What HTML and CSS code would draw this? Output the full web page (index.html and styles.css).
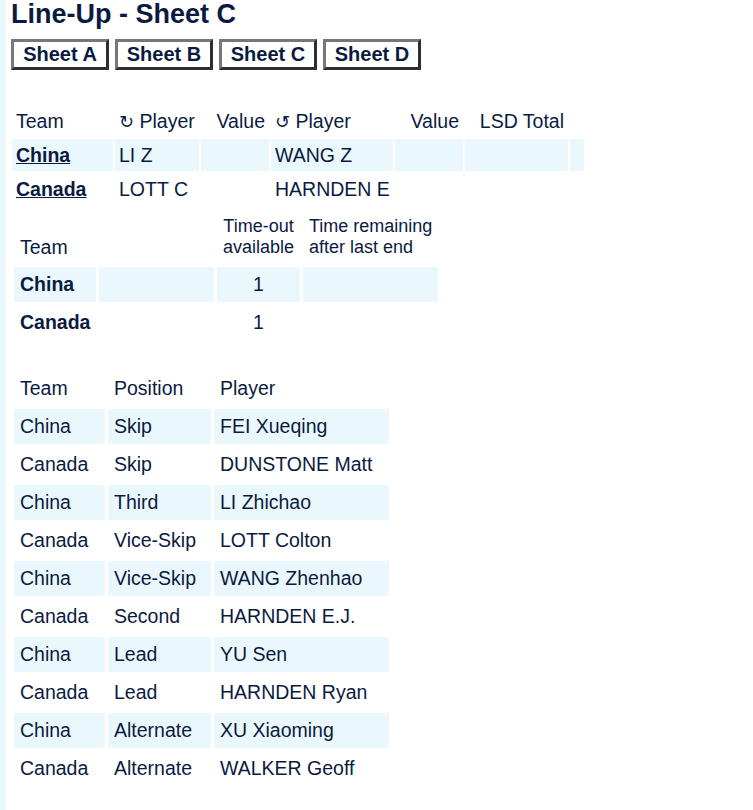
FILE: index.html
```html
<!DOCTYPE html>
<html lang="en">
<head>
<meta charset="utf-8">
<title>Line-Up - Sheet C</title>
<link rel="stylesheet" href="styles.css">
</head>
<body>
<div class="page">
  <h1 class="title">Line-Up - Sheet C</h1>
  <div class="sheets">
    <a class="sheet-btn" href="#">Sheet A</a>
    <a class="sheet-btn" href="#">Sheet B</a>
    <a class="sheet-btn" href="#">Sheet C</a>
    <a class="sheet-btn" href="#">Sheet D</a>
  </div>

  <table class="lsd">
    <thead>
      <tr>
        <th class="c1">Team</th>
        <th class="c2"><span class="arrow">↻</span> Player</th>
        <th class="c3 num">Value</th>
        <th class="c4"><span class="arrow">↺</span> Player</th>
        <th class="c5 num">Value</th>
        <th class="c6 num">LSD Total</th>
        <th class="c7"></th>
      </tr>
    </thead>
    <tbody>
      <tr class="shade">
        <td><a class="team-link" href="#">China</a></td>
        <td>LI Z</td>
        <td></td>
        <td>WANG Z</td>
        <td></td>
        <td></td>
        <td></td>
      </tr>
      <tr>
        <td><a class="team-link" href="#">Canada</a></td>
        <td>LOTT C</td>
        <td></td>
        <td>HARNDEN E</td>
        <td></td>
        <td></td>
        <td></td>
      </tr>
    </tbody>
  </table>

  <table class="timeouts">
    <thead>
      <tr>
        <th class="c1 big">Team</th>
        <th class="c2"></th>
        <th class="c3 center">Time-out<br>available</th>
        <th class="c4">Time remaining<br>after last end</th>
      </tr>
    </thead>
    <tbody>
      <tr class="shade">
        <td class="bold">China</td>
        <td></td>
        <td class="center">1</td>
        <td></td>
      </tr>
      <tr>
        <td class="bold">Canada</td>
        <td></td>
        <td class="center">1</td>
        <td></td>
      </tr>
    </tbody>
  </table>

  <table class="lineup">
    <thead>
      <tr>
        <th class="c1">Team</th>
        <th class="c2">Position</th>
        <th class="c3">Player</th>
      </tr>
    </thead>
    <tbody>
      <tr class="shade"><td>China</td><td>Skip</td><td>FEI Xueqing</td></tr>
      <tr><td>Canada</td><td>Skip</td><td>DUNSTONE Matt</td></tr>
      <tr class="shade"><td>China</td><td>Third</td><td>LI Zhichao</td></tr>
      <tr><td>Canada</td><td>Vice-Skip</td><td>LOTT Colton</td></tr>
      <tr class="shade"><td>China</td><td>Vice-Skip</td><td>WANG Zhenhao</td></tr>
      <tr><td>Canada</td><td>Second</td><td>HARNDEN E.J.</td></tr>
      <tr class="shade"><td>China</td><td>Lead</td><td>YU Sen</td></tr>
      <tr><td>Canada</td><td>Lead</td><td>HARNDEN Ryan</td></tr>
      <tr class="shade"><td>China</td><td>Alternate</td><td>XU Xiaoming</td></tr>
      <tr><td>Canada</td><td>Alternate</td><td>WALKER Geoff</td></tr>
    </tbody>
  </table>
</div>
</body>
</html>
```
FILE: styles.css
```css
html, body {
  margin: 0;
  padding: 0;
  background: #eaf7fc;
}

.page {
  margin-left: 6px;
  min-height: 810px;
  background: #ffffff;
  padding: 0 0 0 4px;
  font-family: "Liberation Sans", Arial, "DejaVu Sans", sans-serif;
  font-size: 19.5px;
  color: #0b1b3f;
}

.title {
  margin: 0 0 0 1px;
  font-size: 27px;
  line-height: 28px;
  font-weight: bold;
}

.sheets {
  display: flex;
  gap: 6px;
  margin: 11px 0 0 1px;
}

.sheet-btn {
  display: block;
  width: 98px;
  box-sizing: border-box;
  text-align: center;
  background: #ffffff;
  border: 3px solid;
  border-color: #777777 #2e2e2e #2e2e2e #777777;
  font-weight: bold;
  font-size: 20px;
  line-height: 25px;
  color: #0b1b3f;
  text-decoration: none;
}

table {
  border-collapse: separate;
  table-layout: fixed;
  font-size: 19.5px;
  color: #0b1b3f;
}

th, td {
  box-sizing: border-box;
  font-weight: normal;
  text-align: left;
  white-space: nowrap;
  overflow: visible;
}

.shade td {
  background: #eaf8fd;
}

.num { text-align: right; }
.center { text-align: center; }
.bold { font-weight: bold; }

.arrow {
  font-family: "DejaVu Sans", sans-serif;
  font-size: 18px;
  line-height: 1;
}

.team-link {
  color: #0b1b3f;
  font-weight: bold;
  text-decoration: underline;
}

/* Table 1: LSD */
.lsd {
  border-spacing: 2px;
  width: 576px;
  margin-top: 33px;
}
.lsd th, .lsd td {
  padding: 5px 4px;
  line-height: 22px;
  height: 32px;
}
.lsd .c1 { width: 101px; }
.lsd .c2 { width: 84px; }
.lsd .c3 { width: 68px; }
.lsd .c4 { width: 122px; }
.lsd .c5 { width: 68px; }
.lsd .c6 { width: 103px; }
.lsd .c7 { width: 14px; }

/* Table 2: time-outs */
.timeouts {
  border-spacing: 3px;
  width: 430px;
  margin: 2px 0 0 1px;
}
.timeouts th {
  padding: 4px 6px 6px;
  font-size: 18px;
  line-height: 21px;
  vertical-align: bottom;
}
.timeouts th.big {
  font-size: 19.5px;
}
.timeouts th.center { text-align: center; }
.timeouts td {
  padding: 6px;
  line-height: 23px;
}
.timeouts .c1 { width: 82px; }
.timeouts .c2 { width: 115px; }
.timeouts .c3 { width: 83px; }
.timeouts .c4 { width: 135px; }

/* Table 3: line-up */
.lineup {
  border-spacing: 3px;
  width: 381px;
  margin: 25px 0 0 1px;
}
.lineup th, .lineup td {
  padding: 6px;
  line-height: 23px;
}
.lineup .c1 { width: 91px; }
.lineup .c2 { width: 103px; }
.lineup .c3 { width: 175px; }
```
